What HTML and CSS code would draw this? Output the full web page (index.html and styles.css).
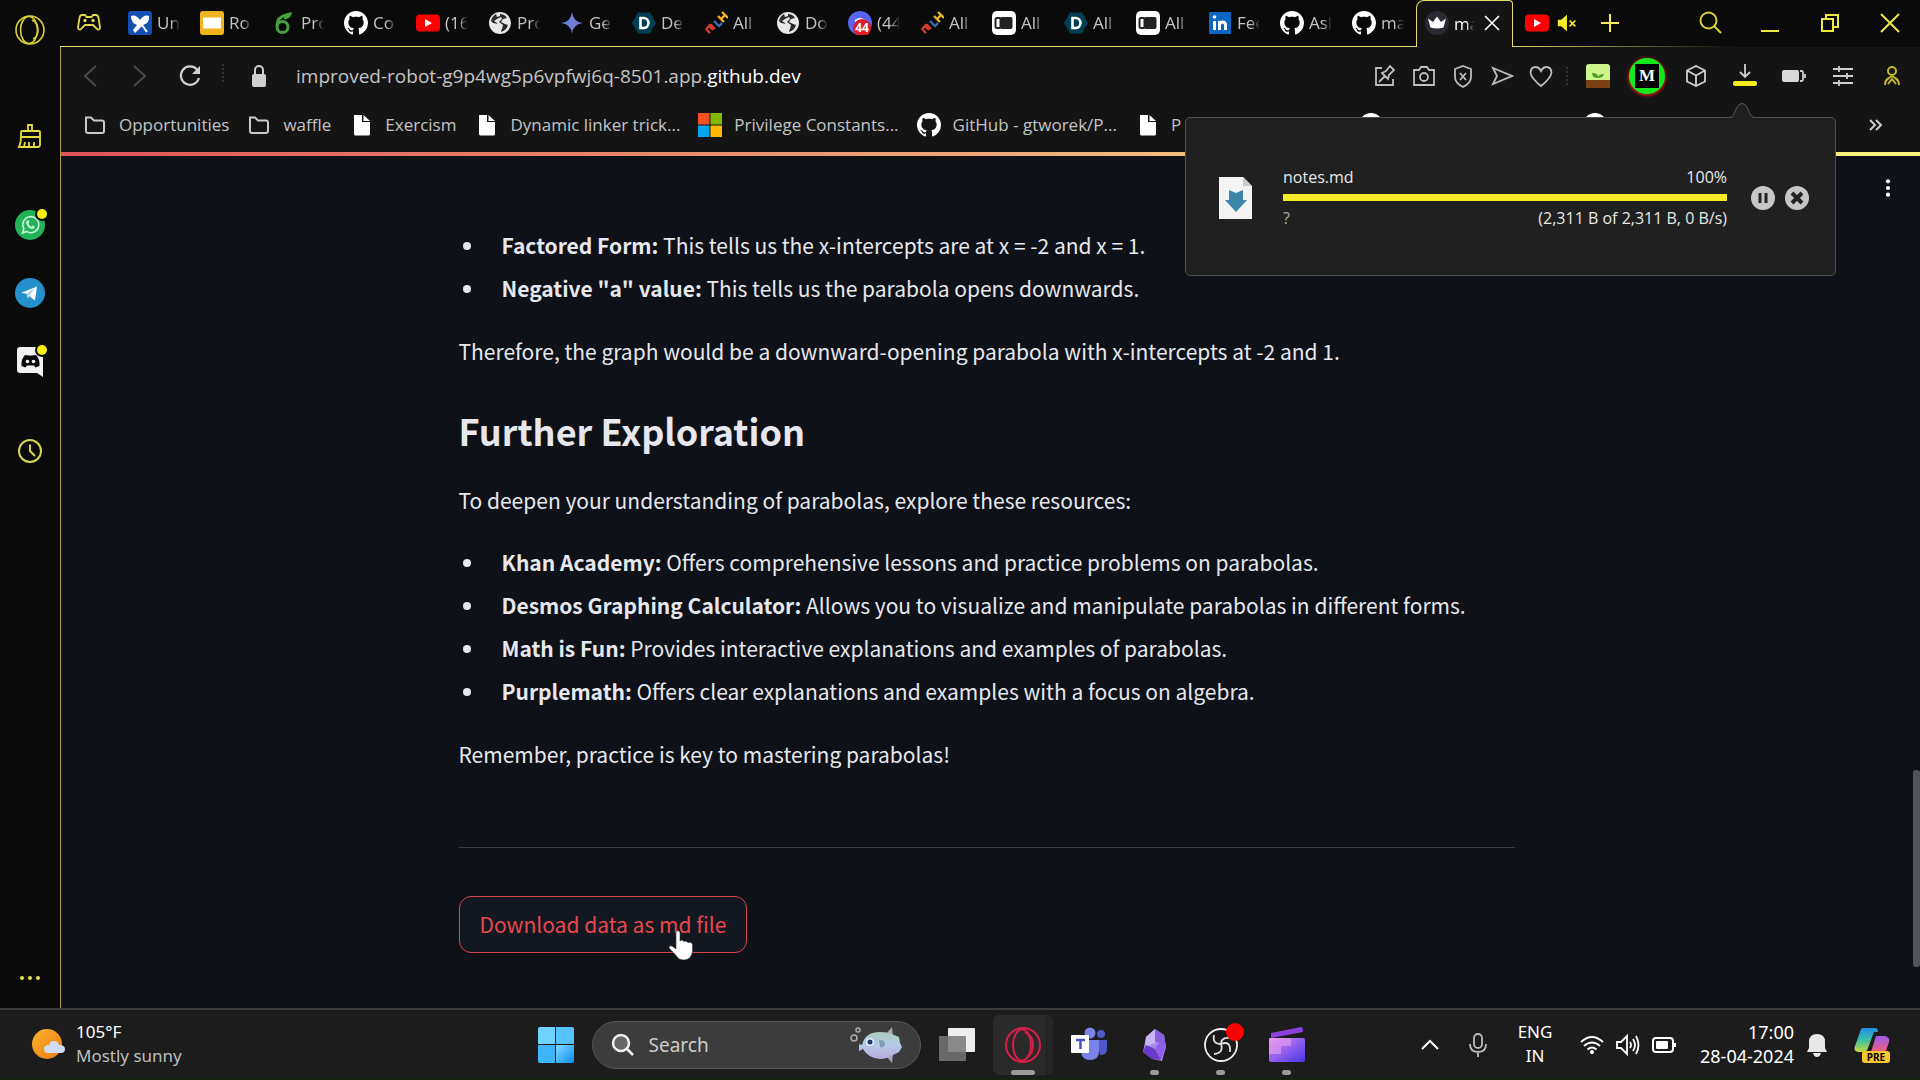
FILE: index.html
```html
<!DOCTYPE html>
<html lang="en">
<head>
    <meta charset="UTF-8">
    <meta name="viewport" content="width=device-width, initial-scale=1.0">
    <title>Notes</title>
    <link rel="stylesheet" href="styles.css">
</head>
<body>
    <!-- shared icons -->
    <svg class="defs" aria-hidden="true">
        <defs>
            <linearGradient id="gem" x1="0" y1="0" x2="1" y2="1"><stop offset="0" stop-color="#4f8df0"/><stop offset="1" stop-color="#8d6fc0"/></linearGradient>
            <linearGradient id="win" x1="0" y1="0" x2="1" y2="1"><stop offset="0" stop-color="#7fdcff"/><stop offset="1" stop-color="#0c8cf0"/></linearGradient>
            <linearGradient id="sun" x1="0" y1="0" x2="1" y2="1"><stop offset="0" stop-color="#fbb52c"/><stop offset="1" stop-color="#ee7a12"/></linearGradient>
            <linearGradient id="fish" x1="0" y1="0" x2="0" y2="1"><stop offset="0" stop-color="#a9cdbd"/><stop offset=".5" stop-color="#b5c8e6"/><stop offset="1" stop-color="#b9a9dd"/></linearGradient>
            <linearGradient id="clip" x1="0" y1="0" x2="1" y2="1"><stop offset="0" stop-color="#d78af0"/><stop offset="1" stop-color="#4a35ea"/></linearGradient>
            <linearGradient id="co1" x1="0" y1="0" x2="0" y2="1"><stop offset="0" stop-color="#1f8ce8"/><stop offset=".5" stop-color="#3cc0a8"/><stop offset="1" stop-color="#c8d83c"/></linearGradient>
            <linearGradient id="co2" x1="0" y1="0" x2="0" y2="1"><stop offset="0" stop-color="#a05af0"/><stop offset="1" stop-color="#f0607c"/></linearGradient>
        </defs>
        <symbol id="github" viewBox="0 0 16 16"><path fill="#fff" d="M8 0C3.58 0 0 3.58 0 8c0 3.54 2.29 6.53 5.47 7.59.4.07.55-.17.55-.38 0-.19-.01-.82-.01-1.49-2.01.37-2.53-.49-2.69-.94-.09-.23-.48-.94-.82-1.13-.28-.15-.68-.52-.01-.53.63-.01 1.08.58 1.23.82.72 1.21 1.87.87 2.33.66.07-.52.28-.87.51-1.07-1.78-.2-3.64-.89-3.64-3.95 0-.87.31-1.59.82-2.15-.08-.2-.36-1.02.08-2.12 0 0 .67-.21 2.2.82.64-.18 1.32-.27 2-.27s1.36.09 2 .27c1.53-1.04 2.2-.82 2.2-.82.44 1.1.16 1.92.08 2.12.51.56.82 1.27.82 2.15 0 3.07-1.87 3.75-3.65 3.95.29.25.54.73.54 1.48 0 1.07-.01 1.93-.01 2.2 0 .21.15.46.55.38A8.01 8.01 0 0 0 16 8c0-4.42-3.58-8-8-8z"/></symbol>
        <symbol id="youtube" viewBox="0 0 24 24"><rect y="3.500" width="24" height="17" rx="4" fill="#f00"/><path fill="#fff" d="M9 8v8l7-4z"/></symbol>
        <symbol id="globe" viewBox="0 0 24 24"><circle cx="12" cy="12" r="11" fill="#e8e8e8"/><path fill="#151515" d="M12 3c3 0 5 1 7 4l-4 1-2 3 4 2 3 1c-1 4-4 6-7 7l1-4-3-2-1-2-5-1-2-2c1-4 3-6 5-7l1 3 3-1z" opacity=".9"/><path fill="#e8e8e8" d="M9 8l4-2 1 2-3 3 4 3-1 4-3-2-2-4-3-2z"/></symbol>
        <symbol id="mlh" viewBox="0 0 24 24"><g fill="none" stroke-width="2.400"><path stroke="#d63a2f" d="M2 18l4 4M2 18l3-3 4 4M5 15l2-1 4 4"/><path stroke="#3a6bb0" d="M10 10l5 5 3-3"/><path stroke="#f0b429" d="M14 5l6 6M18 1l6 6M17 8l4-4"/></g></symbol>
        <symbol id="devpost" viewBox="0 0 24 24"><path fill="#003e54" d="M6 1.600h12L24 12l-6 10.400H6L0 12z"/><path fill="none" stroke="#fff" stroke-width="2.600" d="M8.500 7v10h3a5 5 0 0 0 0-10z"/></symbol>
        <symbol id="unstop" viewBox="0 0 24 24"><rect width="24" height="24" rx="5" fill="#fff"/><rect x="7.500" y="6" width="13" height="12" rx="2" fill="#222"/><path fill="none" stroke="#222" stroke-width="2" d="M8 7H5q-1.500 0-1.500 1.500v7Q3.500 17 5 17h3"/></symbol>
        <symbol id="folder" viewBox="0 0 24 24"><path fill="none" stroke="#c9c9c9" stroke-width="2" d="M3 4.500h5l3 3h8a2 2 0 0 1 2 2V18a2 2 0 0 1-2 2H5a2 2 0 0 1-2-2z"/></symbol>
        <symbol id="doc" viewBox="0 0 24 24"><path fill="#fff" d="M5 2h8v7h8v12a1.500 1.500 0 0 1-1.500 1.500h-13A1.500 1.500 0 0 1 5 21z"/><path fill="#fff" d="M14.500 2L21 8h-6.500z"/></symbol>
    </svg>

    <div class="browser">
        <nav class="sidebar">
            <button class="side-btn" aria-label="Menu"><svg viewBox="0 0 30 30" fill="none" stroke="#d8d038" stroke-width="1.600"><circle cx="15" cy="15" r="14"/><ellipse cx="14" cy="15" rx="8.500" ry="13.500"/><path d="M17 5q6 3 6 10t-5 9"/></svg></button>
            <button class="side-btn cleaner" aria-label="Cleaner"><svg viewBox="0 0 30 30" fill="none" stroke="#e6de3c" stroke-width="1.800"><path d="M13 10V4h4v6M6 16v-5q0-1 1-1h17q1 0 1 1v5zM6 16q0 6-2 10h19q2 0 2-3v-7M9 26l1-5M14 26v-5M19 26v-5"/></svg></button>
            <button class="side-btn whatsapp" aria-label="WhatsApp"><svg viewBox="0 0 30 30"><circle cx="15" cy="15" r="15" fill="#22b358"/><path fill="none" stroke="#c9f7d8" stroke-width="1.600" d="M7.500 23l1.300-4.500a8 8 0 1 1 2.700 2.900z"/><path fill="#c9f7d8" d="M12 10.500l1.500-.5 1 2.500-1 1.200q1 2 3 3l1.300-1.200 2.200 1.200q-.5 2.600-3 2.300-5-1.200-6-6.500z"/></svg><i class="badge"></i></button>
            <button class="side-btn telegram" aria-label="Telegram"><svg viewBox="0 0 30 30"><circle cx="15" cy="15" r="15" fill="#2490cc"/><path fill="#fff" d="M6 15L22 8.500 20 22.500l-6-4.500-1.500 2-1-4.500z"/><path fill="#a8d4ee" d="M11.500 15.500L20 10l-6 8-1.500 2.500z"/></svg></button>
            <button class="side-btn discord" aria-label="Discord"><svg viewBox="0 0 30 30"><path fill="#f2f2f2" d="M5 1h21q2 0 2 2v28l-6-4H5q-3 0-3-3V4q0-3 3-3z"/><path fill="#0a0a0a" d="M10 9l4 .5h3l4-.5q4 4 3.500 11l-4 1.500-1.500-2h-7l-1.500 2-4-1.500Q6 13 10 9z"/><circle cx="12.500" cy="15.500" r="1.800" fill="#f2f2f2"/><circle cx="18.500" cy="15.500" r="1.800" fill="#f2f2f2"/></svg><i class="badge"></i></button>
            <button class="side-btn history" aria-label="History"><svg viewBox="0 0 30 30" fill="none" stroke="#d8d550" stroke-width="2"><circle cx="15" cy="15" r="11"/><path d="M15 8.500V15l5 5"/></svg></button>
            <button class="side-btn more" aria-label="More"><svg viewBox="0 0 30 30" fill="#e6de50"><circle cx="7" cy="15" r="2"/><circle cx="15" cy="15" r="2"/><circle cx="23" cy="15" r="2"/></svg></button>
        </nav>

        <div class="window">
            <div class="tab-strip">
                <button class="gx-corner" aria-label="GX Corner"><svg viewBox="0 0 24 24" fill="none" stroke="#e0d94a" stroke-width="1.800"><path d="M5 4h3l1.500 2h5L16 4h3q2 0 2.500 3L23 16q0 3-2.500 2.500L16 14H8l-4.500 4.500Q1 19 1 16L2.500 7Q3 4 5 4z"/><circle cx="8" cy="9.500" r=".8"/><circle cx="16" cy="9.500" r=".8"/></svg></button>
                <button class="tab"><svg viewBox="0 0 24 24"><rect width="24" height="24" rx="3" fill="#1551b5"/><path fill="#fff" d="M3 5q5-2 9 4 4-6 9-4 1 7-6 9l-8 8-2-3 4-5q-6-2-6-9z"/><path stroke="#fff" stroke-width="2" d="M14 14l5 7"/></svg><span>Un</span></button>
                <button class="tab"><svg viewBox="0 0 24 24"><rect width="24" height="24" rx="3" fill="#efb41e"/><rect x="3" y="6.500" width="18" height="11" fill="#fff"/></svg><span>Ro</span></button>
                <button class="tab"><svg viewBox="0 0 24 24" fill="none" stroke="#47a141" stroke-width="3"><circle cx="10.500" cy="16" r="5.500"/><path d="M5 15Q5 6 14 4l4-1q-1 4-6 4"/></svg><span>Pro</span></button>
                <button class="tab"><svg><use href="#github"/></svg><span>Co</span></button>
                <button class="tab"><svg><use href="#youtube"/></svg><span>(16</span></button>
                <button class="tab"><svg><use href="#globe"/></svg><span>Pro</span></button>
                <button class="tab"><svg viewBox="0 0 24 24"><path fill="url(#gem)" d="M12 1q1 10 11 11-10 1-11 11-1-10-11-11 10-1 11-11z"/></svg><span>Ge</span></button>
                <button class="tab"><svg><use href="#devpost"/></svg><span>De</span></button>
                <button class="tab"><svg><use href="#mlh"/></svg><span>All</span></button>
                <button class="tab"><svg><use href="#globe"/></svg><span>Do</span></button>
                <button class="tab"><svg viewBox="0 0 24 24"><circle cx="12" cy="12" r="12" fill="#5865f2"/><path fill="#fff" d="M7 9q5-4 10 0v4H7z"/><circle cx="14" cy="17" r="9" fill="#e01b2c"/><text x="14" y="21" class="count">44</text></svg><span>(44</span></button>
                <button class="tab"><svg><use href="#mlh"/></svg><span>All</span></button>
                <button class="tab"><svg><use href="#unstop"/></svg><span>All</span></button>
                <button class="tab"><svg><use href="#devpost"/></svg><span>All</span></button>
                <button class="tab"><svg><use href="#unstop"/></svg><span>All</span></button>
                <button class="tab"><svg viewBox="0 0 24 24"><rect x="1" y="1" width="22" height="22" rx="1" fill="#0a66c2"/><path stroke="#fff" stroke-width="3" fill="none" d="M6.500 10v9M11.500 10v9M11.500 19v-5q0-3 3-3t3 3v5"/><circle cx="6.500" cy="6" r="1.800" fill="#fff"/></svg><span>Fee</span></button>
                <button class="tab"><svg><use href="#github"/></svg><span>Asl</span></button>
                <button class="tab"><svg><use href="#github"/></svg><span>ma</span></button>
                <button class="tab active"><svg viewBox="0 0 24 24"><circle cx="12" cy="12" r="12" fill="#2a2a34"/><path fill="#fff" d="M3 7.500l5 3.500 4-5.500 4 5.500 5-3.500-2.500 9q-6.500 2-13 0z"/></svg><span>ma</span><svg class="close" viewBox="0 0 16 16"><path stroke="#fff" stroke-width="1.600" d="M1 1l14 14M15 1L1 15"/></svg></button>
                <button class="tab muted" aria-label="Muted tab"><svg><use href="#youtube"/></svg><svg viewBox="0 0 24 24"><path fill="#f5ec2c" d="M1 8h4l7-6v20l-7-6H1z"/><path stroke="#f5ec2c" stroke-width="2" d="M15 9l7 7M22 9l-7 7"/></svg></button>
                <button class="new-tab" aria-label="New tab"><svg viewBox="0 0 24 24"><path stroke="#f5ec5c" stroke-width="2" d="M12 3v18M3 12h18"/></svg></button>
                <div class="window-controls">
                    <button aria-label="Search tabs"><svg viewBox="0 0 24 24" fill="none" stroke="#d8d038" stroke-width="2"><circle cx="10.500" cy="9.500" r="8"/><path d="M16 15l7 7"/></svg></button>
                    <button aria-label="Minimize"><svg viewBox="0 0 24 24"><path stroke="#f0e840" stroke-width="2" d="M3 20h18"/></svg></button>
                    <button aria-label="Restore"><svg viewBox="0 0 24 24" fill="none" stroke="#f0e840" stroke-width="2"><path d="M4 8h11v12H4zM8 8V4h12v12h-5"/></svg></button>
                    <button aria-label="Close"><svg viewBox="0 0 24 24"><path stroke="#f0e840" stroke-width="2" d="M3 3l18 18M21 3L3 21"/></svg></button>
                </div>
            </div>

            <div class="view">
                <div class="address-bar">
                    <div class="nav-buttons">
                        <button aria-label="Back"><svg viewBox="0 0 24 24" fill="none" stroke="#4a4a4a" stroke-width="2"><path d="M18 2L7 12l11 10"/></svg></button>
                        <button aria-label="Forward"><svg viewBox="0 0 24 24" fill="none" stroke="#4a4a4a" stroke-width="2"><path d="M6 2l11 10L6 22"/></svg></button>
                        <button aria-label="Reload"><svg viewBox="0 0 24 24" fill="none" stroke="#cfcfcf" stroke-width="2.200"><path d="M21 14a9.200 9.200 0 1 1-2-8.500"/><path fill="#cfcfcf" stroke="none" d="M22 2v8h-8z"/></svg></button>
                    </div>
                    <svg class="lock" viewBox="0 0 24 24"><rect x="5" y="10" width="14" height="13" rx="2" fill="#cfcfcf"/><path fill="none" stroke="#cfcfcf" stroke-width="2" d="M8 11V6a4 4 0 0 1 8 0v5"/></svg>
                    <div class="url">improved-robot-g9p4wg5p6vpfwj6q-8501.app.<b>github.dev</b></div>
                    <div class="page-actions">
                        <button aria-label="Pin"><svg viewBox="0 0 24 24" fill="none" stroke="#bdbdbd" stroke-width="1.800"><path d="M9 4H3v17h17v-6M6 18l6-6M9 9l6 6 1-4 5-5-4-4-4 5z"/></svg></button>
                        <button aria-label="Snapshot"><svg viewBox="0 0 24 24" fill="none" stroke="#bdbdbd" stroke-width="1.800"><path d="M2 6h5l2-3h6l2 3h5v15H2z"/><circle cx="12" cy="13" r="4"/></svg></button>
                        <button aria-label="Ad blocker"><svg viewBox="0 0 24 24" fill="none" stroke="#bdbdbd" stroke-width="1.800"><path d="M12 2l8 3v8q0 6-8 10-8-4-8-10V5zM9 9l6 7M15 9l-6 7"/></svg></button>
                        <button aria-label="Send"><svg viewBox="0 0 24 24" fill="none" stroke="#bdbdbd" stroke-width="1.800"><path d="M3 4l19 8-19 8 4-8z"/></svg></button>
                        <button aria-label="Bookmark"><svg viewBox="0 0 24 24" fill="none" stroke="#bdbdbd" stroke-width="1.800"><path d="M12 22Q2 14 1.500 8.500 2 3 6.500 3 10 3 12 7q2-4 5.500-4Q22 3 22.500 8.500 22 14 12 22z"/></svg></button>
                    </div>
                    <div class="extensions">
                        <button aria-label="Plant"><svg viewBox="0 0 24 24"><rect width="24" height="24" rx="3" fill="#cdf58c"/><path fill="#7a3f12" d="M0 16h24v5q0 3-3 3H3q-3 0-3-3z"/><path fill="#4c9a2a" d="M6 9q6 0 6 4 1-3 6-3-1 4-6 4-6 0-6-5z"/></svg></button>
                        <button class="ext-m" aria-label="M extension"><b>M</b></button>
                        <button aria-label="Extensions"><svg viewBox="0 0 24 24" fill="none" stroke="#cfcfcf" stroke-width="1.800"><path d="M12 2l9 4.500v11L12 22l-9-4.500v-11zM3 6.500l9 5 9-5M12 11.500V22"/></svg></button>
                        <button aria-label="Downloads"><svg viewBox="0 0 24 24" fill="none"><path stroke="#cfcfcf" stroke-width="1.800" d="M12 0v13M7 8l5 5 5-5"/><rect y="17" width="24" height="5" rx="2" fill="#f5ec1c"/></svg></button>
                        <button aria-label="Battery saver"><svg viewBox="0 0 24 24"><rect y="6" width="17" height="12" rx="2" fill="#d8d8d8"/><path fill="none" stroke="#cfcfcf" stroke-width="1.800" d="M18 7h1.500q1.500 0 1.500 1.500v7q0 1.500-1.500 1.500H18M23 10v4"/></svg></button>
                        <button aria-label="Easy setup"><svg viewBox="0 0 24 24" stroke="#cfcfcf" stroke-width="1.800"><path d="M2 5h20M2 12h20M2 19h20M8 2v6M16 9v6M8 16v6"/></svg></button>
                        <button aria-label="Profile"><svg viewBox="0 0 24 24" fill="none" stroke="#c4b52e" stroke-width="2"><circle cx="12" cy="7" r="4"/><path d="M5 21q0-5 4-7l3-2 3 2q4 2 4 7M8 20l4-5 4 5"/></svg></button>
                    </div>
                </div>

                <div class="bookmarks">
                    <a href="#"><svg><use href="#folder"/></svg>Opportunities</a>
                    <a href="#"><svg><use href="#folder"/></svg>waffle</a>
                    <a href="#"><svg><use href="#doc"/></svg>Exercism</a>
                    <a href="#"><svg><use href="#doc"/></svg>Dynamic linker trick...</a>
                    <a href="#"><svg viewBox="0 0 24 24"><path fill="#f25022" d="M0 0h11.500v11.500H0z"/><path fill="#7fba00" d="M12.500 0H24v11.500H12.500z"/><path fill="#00a4ef" d="M0 12.500h11.500V24H0z"/><path fill="#ffb900" d="M12.500 12.500H24V24H12.500z"/></svg>Privilege Constants...</a>
                    <a href="#"><svg><use href="#github"/></svg>GitHub - gtworek/P...</a>
                    <a href="#" class="long"><svg><use href="#doc"/></svg>P</a>
                    <a href="#" class="long" aria-label="GitHub"><svg><use href="#github"/></svg></a>
                    <a href="#" aria-label="GitHub"><svg><use href="#github"/></svg></a>
                    <button class="overflow" aria-label="More bookmarks"><svg viewBox="0 0 24 24" fill="none" stroke="#cfcfcf" stroke-width="2"><path d="M6 7l5 5-5 5M12 7l5 5-5 5"/></svg></button>
                </div>

                <div class="download-popup">
                    <svg class="arrow" viewBox="0 0 24 16"><path fill="#202020" stroke="#555" d="M0 14.500q3 0 5-6l3-6q4-4 8 0l3 6q2 6 5 6"/><path fill="#202020" d="M2 14h20v2H2z"/></svg>
                    <svg class="file-icon" viewBox="0 0 34 44"><path fill="#f4f4f4" d="M0 1h24l9 9v33H0z"/><path fill="#c8c8c8" d="M24 1v9h9z"/><path fill="#3a87ab" d="M10 14l7 3 7-3v10h4L17 36 6 24h4z"/></svg>
                    <div class="download-info">
                        <div class="row"><span>notes.md</span><span>100%</span></div>
                        <div class="progress"></div>
                        <div class="row"><span class="dim">?</span><span>(2,311 B of 2,311 B, 0 B/s)</span></div>
                    </div>
                    <div class="download-buttons">
                        <button aria-label="Pause"><svg viewBox="0 0 24 24"><circle cx="12" cy="12" r="12" fill="#c6c6c6"/><path stroke="#222" stroke-width="3" d="M9 7v10M15 7v10"/></svg></button>
                        <button aria-label="Cancel"><svg viewBox="0 0 24 24"><circle cx="12" cy="12" r="12" fill="#c6c6c6"/><path stroke="#222" stroke-width="4" d="M7 7l10 10M17 7L7 17"/></svg></button>
                    </div>
                </div>

                <main class="page">
                    <button class="kebab" aria-label="Page menu"><svg viewBox="0 0 24 24" fill="#fff"><circle cx="12" cy="4" r="2.500"/><circle cx="12" cy="12" r="2.500"/><circle cx="12" cy="20" r="2.500"/></svg></button>
                    <div class="scroll-thumb"></div>
                    <div class="content">
                        <ul>
                            <li><strong>Factored Form:</strong> This tells us the x-intercepts are at x = -2 and x = 1.</li>
                            <li><strong>Negative "a" value:</strong> This tells us the parabola opens downwards.</li>
                        </ul>
                        <p>Therefore, the graph would be a downward-opening parabola with x-intercepts at -2 and 1.</p>
                        <h2>Further Exploration</h2>
                        <p>To deepen your understanding of parabolas, explore these resources:</p>
                        <ul>
                            <li><strong>Khan Academy:</strong> Offers comprehensive lessons and practice problems on parabolas.</li>
                            <li><strong>Desmos Graphing Calculator:</strong> Allows you to visualize and manipulate parabolas in different forms.</li>
                            <li><strong>Math is Fun:</strong> Provides interactive explanations and examples of parabolas.</li>
                            <li><strong>Purplemath:</strong> Offers clear explanations and examples with a focus on algebra.</li>
                        </ul>
                        <p>Remember, practice is key to mastering parabolas!</p>
                        <hr>
                        <button class="download-btn">Download data as md file<svg class="cursor" viewBox="0 0 26 32"><path fill="#fff" stroke="#333" stroke-width=".6" d="M8 3q2-3 4 0v9q2-2 4 .500 2-1.500 4 1 3-1 4.500 1.500V22q-1 9-9 9-5 0-7-4L1 19q0-3 3-2l4 3z"/></svg></button>
                    </div>
                </main>
            </div>
        </div>
    </div>

    <footer class="taskbar">
        <button class="weather">
            <svg viewBox="0 0 36 36"><circle cx="15" cy="17" r="15" fill="url(#sun)"/><path fill="#cfdcf5" d="M16 26q-4 0-4-4t5-4q1-4 5-4t5 4q6 0 6 4t-4 4z"/></svg>
            <span class="lines"><span>105°F</span><span class="dim">Mostly sunny</span></span>
        </button>
        <div class="apps">
            <button aria-label="Start"><svg viewBox="0 0 36 36" fill="url(#win)"><path fill="#6fd3ff" d="M2 0h15v17H0V2q0-2 2-2z"/><path fill="#56c4fc" d="M18 0h16q2 0 2 2v15H18z"/><path fill="#3fb6fa" d="M0 18h17v18H2q-2 0-2-2z"/><path d="M18 18h18v16q0 2-2 2H18z"/></svg></button>
            <label class="search">
                <svg viewBox="0 0 24 24" fill="#666" stroke="#eee" stroke-width="2.500"><circle cx="10" cy="10" r="8"/><path d="M16 16l6 6"/></svg>
                <input type="text" placeholder="Search" aria-label="Search">
                <svg class="fish" viewBox="0 0 52 38"><g fill="none" stroke="#aaa" stroke-width="1.500"><circle cx="4" cy="12" r="3"/><circle cx="8" cy="4" r="2"/></g><path fill="#a9a2b8" d="M36 8l6-7 1 9zM36 30l6 7 1-9z"/><path fill="url(#fish)" d="M9 18l3 1q3-13 18-13 9 0 14 3l5 2 1 6 2 4-3 5-6 3q-6 4-13 4-12-1-17-10l-4 2z"/><path fill="#7d9fae" d="M29 14q6 0 6 4-1 4-5 3z"/><circle cx="20" cy="16" r="4" fill="#eef"/><circle cx="20" cy="16" r="2.500" fill="#123a6a"/></svg>
            </label>
            <button aria-label="Task view"><svg viewBox="0 0 36 36"><rect x="9" y="1" width="27" height="24" rx="1" fill="#eee"/><rect y="9" width="27" height="25" rx="1" fill="#777" opacity=".85"/></svg></button>
            <button class="current" aria-label="Opera GX"><svg viewBox="0 0 36 36" fill="none" stroke="#d61f48" stroke-width="2"><circle cx="18" cy="18" r="17"/><ellipse cx="17" cy="18" rx="9" ry="15.500"/><path d="M20 5q8 4 8 13t-6 12"/></svg></button>
            <button aria-label="Teams"><svg viewBox="0 0 36 36"><circle cx="19" cy="6" r="5.500" fill="#7b83eb"/><circle cx="30" cy="7" r="4" fill="#5059c9"/><path fill="#5059c9" d="M26 13h10v9q0 6-7 6z"/><path fill="#7b83eb" d="M11 13h17v11q0 9-9 9-8 0-9-8z"/><rect y="8" width="18" height="18" rx="1" fill="#fff"/><path stroke="#4b53bc" stroke-width="2.500" d="M5 13h9M9.500 13v9"/></svg></button>
            <button class="running" aria-label="Obsidian"><svg viewBox="0 0 36 36"><path fill="#a78be8" d="M18 2l9 6 2 12-4 14-10-2-9-7 3-15z"/><path fill="#c9b5f5" d="M18 2L9 10l-1 10 10-4z"/><path fill="#8a60e0" d="M18 2l9 6 2 12-7-4-4-2z"/><path fill="#6a3ac8" d="M6 25l3-7 9 4 6 11-9-1z"/><path fill="#8f5eea" d="M29 20l-7-4-4 6 6 11z"/></svg></button>
            <button class="running" aria-label="OBS Studio"><svg viewBox="0 0 36 36"><circle cx="18" cy="18" r="16" fill="#18181a" stroke="#eee" stroke-width="1.800"/><path fill="none" stroke="#ddd" stroke-width="1.800" d="M11 8q-2 9 7 9 10-4 9 8M18 17q3 9-7 10M18 17q0-7 9-6"/><circle cx="32" cy="5" r="9" fill="#f00"/></svg></button>
            <button class="running" aria-label="Clipchamp"><svg viewBox="0 0 36 36"><path fill="#8b3fdc" d="M2 6L32 0q2 0 2 5L2 11z"/><rect y="11" width="36" height="24" rx="2" fill="url(#clip)"/><path fill="#f6a8f4" opacity=".5" d="M0 11h22v8H12v8H0z"/></svg></button>
        </div>
        <div class="tray">
            <button aria-label="Hidden icons"><svg viewBox="0 0 24 24" fill="none" stroke="#fff" stroke-width="2"><path d="M4 16l8-8 8 8"/></svg></button>
            <button class="mic" aria-label="Microphone"><svg viewBox="0 0 24 24" fill="none" stroke="#bbb" stroke-width="1.800"><rect x="8" y="1" width="8" height="14" rx="4"/><path d="M4 11q0 8 8 8t8-8M12 19v5"/></svg></button>
            <button class="lines lang"><span>ENG</span><span>IN</span></button>
            <button class="status" aria-label="Network, volume, battery">
                <svg viewBox="0 0 24 24" fill="none" stroke="#fff" stroke-width="1.800"><path d="M1 9q11-10 22 0M4 13q8-7 16 0M7.500 16.500q4.500-4 9 0"/><circle cx="12" cy="19" r="1.600" fill="#fff" stroke="none"/><circle cx="12" cy="19" r="1"/></svg>
                <svg viewBox="0 0 24 24" fill="none" stroke="#fff" stroke-width="1.800"><path d="M1 9h4l6-6v18l-6-6H1zM14 9q2 3 0 6M17 6q4 6 0 12M20 3q5 9 0 18"/></svg>
                <svg viewBox="0 0 24 24" fill="none"><rect x="1" y="5" width="20" height="14" rx="3" stroke="#fff" stroke-width="2"/><rect x="4" y="8" width="12" height="8" rx="1" fill="#fff"/><path stroke="#fff" stroke-width="2" d="M23 10v4"/></svg>
            </button>
            <button class="lines clock"><span>17:00</span><span>28-04-2024</span></button>
            <button class="bell" aria-label="Notifications"><svg viewBox="0 0 24 24" fill="#e8e8e8"><path d="M12 1q8 0 8 8v6l2 4H2l2-4V9q0-8 8-8zM8 20h8q-1 4-4 4t-4-4z"/></svg></button>
            <button class="copilot" aria-label="Copilot"><svg viewBox="0 0 36 36"><path fill="url(#co1)" d="M9 1h12q3 0 3 4h-4L14 21q-1 4-5 4H4q-5-1-3-6L6 5q1-4 3-4z"/><path fill="url(#co2)" d="M22 9h9q5 1 4 6l-3 9-15 1z"/><rect x="8" y="24" width="28" height="12" rx="3" fill="#fbc62e"/><text x="22" y="34" class="pre">PRE</text></svg></button>
        </div>
    </footer>
</body>
</html>
```
FILE: styles.css
```css
* {
    box-sizing: border-box;
}
body {
    margin: 0;
    height: 100vh;
    display: flex;
    flex-direction: column;
    background-color: #0a0a0a;
    color: #c4c4c4;
    font-family: "Open Sans", "Noto Sans", sans-serif;
    font-size: 17px;
    overflow: hidden;
}
button {
    padding: 0;
    border: none;
    background: none;
    color: inherit;
    font-family: inherit;
    font-size: inherit;
    display: flex;
    align-items: center;
    justify-content: center;
    flex: none;
}
svg {
    width: 24px;
    height: 24px;
    flex: none;
    display: block;
}
.defs {
    position: absolute;
    width: 0;
    height: 0;
}
.browser {
    flex: 1;
    min-height: 0;
    display: flex;
}

/* sidebar */
.sidebar {
    width: 60px;
    padding: 15px 0;
    display: flex;
    flex-direction: column;
    align-items: center;
}
.side-btn {
    position: relative;
    width: 30px;
    height: 30px;
}
.side-btn svg {
    width: 30px;
    height: 30px;
    overflow: visible;
}
.cleaner {
    margin-top: 76px;
}
.whatsapp {
    margin-top: 59px;
}
.telegram, .discord {
    margin-top: 38px;
}
.history {
    margin-top: 60px;
}
.more {
    margin-top: auto;
}
.badge {
    position: absolute;
    top: -1px;
    right: -2px;
    width: 10px;
    height: 10px;
    border-radius: 50%;
    background-color: #ffee10;
    box-shadow: 0 0 0 2px #0a0a0a;
}

/* tabs */
.window {
    flex: 1;
    min-width: 0;
    display: flex;
    flex-direction: column;
}
.tab-strip {
    height: 47px;
    padding-left: 17px;
    display: flex;
    background: linear-gradient(90deg, #e3dc6a 78%, transparent 90%) bottom / 100% 1px no-repeat;
}
.tab-strip button {
    padding-bottom: 2px;
}
.gx-corner {
    margin-right: 19px;
}
.tab-strip .tab {
    width: 72px;
    padding: 0 8px 2px;
    gap: 5px;
    justify-content: flex-start;
}
.tab span {
    width: 23px;
    overflow: hidden;
    text-align: left;
    white-space: nowrap;
    mask-image: linear-gradient(90deg, #000 60%, transparent);
}
.tab-strip .active {
    width: 97px;
    background-color: #141414;
    border: 1px solid #e3dc6a;
    border-bottom: none;
    border-radius: 8px 4px 0 0;
    color: #fff;
}
.active span {
    width: 20px;
}
.tab .close {
    width: 16px;
    height: 16px;
    margin-left: 5px;
}
.tab-strip .muted {
    width: 84px;
    gap: 8px;
    padding: 0 12px 2px;
}
.muted svg + svg {
    width: 20px;
}
.new-tab {
    width: 26px;
}
.count {
    font: 700 12px "Open Sans", sans-serif;
    fill: #fff;
    text-anchor: middle;
}
.window-controls {
    margin-left: auto;
    margin-right: 18px;
    display: flex;
    gap: 36px;
}

/* address bar and bookmarks */
.view {
    position: relative;
    flex: 1;
    min-height: 0;
    display: flex;
    flex-direction: column;
    border-left: 1px solid #a89f3c;
    background-color: #141414;
}
.address-bar {
    height: 58px;
    padding: 0 16px 0 17px;
    display: flex;
    align-items: center;
}
.nav-buttons {
    display: flex;
    gap: 26px;
}
.nav-buttons::after, .page-actions::after {
    content: "";
    height: 18px;
    border-left: 2px dotted #333;
    margin-left: -6px;
}
.lock {
    margin: 0 25px 0 23px;
}
.url {
    flex: 1;
    font-size: 19px;
}
.url b {
    font-weight: 400;
    color: #fff;
}
.page-actions, .extensions {
    display: flex;
    align-items: center;
}
.page-actions {
    gap: 15px;
    margin-right: 18px;
}
.page-actions::after {
    margin-left: -2px;
}
.extensions {
    gap: 25px;
}
.ext-m {
    position: relative;
    width: 24px;
    height: 24px;
    color: #fff;
    font-family: "Liberation Serif", serif;
}
.ext-m::before {
    content: "";
    position: absolute;
    inset: -6px;
    border-radius: 50%;
    background-color: #14e81f;
    box-shadow: 0 1px 3px 1px #c41414;
}
.ext-m b {
    position: relative;
    width: 24px;
    background-color: #000;
    line-height: 24px;
}
.bookmarks {
    height: 47px;
    padding: 0 32px 8px 22px;
    display: flex;
    align-items: center;
    gap: 18px;
}
.bookmarks a {
    display: flex;
    align-items: center;
    gap: 12px;
    color: #c4c4c4;
    text-decoration: none;
    white-space: nowrap;
}
.bookmarks .long {
    width: 206px;
}
.overflow {
    margin-left: auto;
}

/* download popup */
.download-popup {
    position: absolute;
    top: 70px;
    right: 84px;
    width: 651px;
    height: 159px;
    padding: 2px 26px 0 33px;
    display: flex;
    align-items: center;
    background-color: #202020;
    border: 1px solid #505050;
    border-radius: 5px;
    z-index: 2;
}
.arrow {
    position: absolute;
    top: -15px;
    right: 81px;
    height: 16px;
}
.file-icon {
    width: 34px;
    height: 44px;
    margin-right: 30px;
}
.download-info {
    flex: 1;
    font-size: 16px;
    color: #e8e8e8;
}
.download-info .row {
    display: flex;
    justify-content: space-between;
    line-height: 34px;
}
.dim {
    color: #a8a8a8;
}
.progress {
    height: 7px;
    background-color: #f3ea2a;
}
.download-buttons {
    display: flex;
    gap: 10px;
    margin-left: 24px;
}

/* page */
.page {
    position: relative;
    flex: 1;
    min-height: 0;
    border-top: 4px solid;
    border-image: linear-gradient(90deg, #e0525a, #f0a878 50%, #f5e87a 80%, #fbf37c) 1;
    background-color: #0e1117;
    color: #e6e8ee;
    font-family: "Noto Sans CJK SC", sans-serif;
    font-size: 21px;
    line-height: 38px;
}
.content {
    width: 1056px;
    max-width: 100%;
    margin: 0 auto;
    padding-top: 70px;
    position: relative;
    right: 4px;
}
.content ul {
    margin: 0 0 25px;
    padding-left: 27px;
}
.content li {
    margin-bottom: 5px;
    padding-left: 16px;
}
.content li:last-child {
    margin-bottom: 0;
}
.content p {
    margin: 0 0 24px;
}
.content h2 {
    margin: 35px 0 26px;
    font-size: 36px;
    line-height: 50px;
}
.content hr {
    margin: 74px 0 48px;
    border: none;
    border-top: 1px solid #3a3d44;
}
.download-btn {
    position: relative;
    height: 57px;
    padding: 0 20px 2px;
    border: 1px solid #d8464e;
    border-radius: 12px;
    background-color: #131720;
    color: #e8474f;
}
.cursor {
    position: absolute;
    left: 208px;
    top: 32px;
    width: 26px;
    height: 32px;
}
.kebab {
    position: absolute;
    top: 22px;
    right: 20px;
}
.kebab svg {
    height: 20px;
}
.scroll-thumb {
    position: absolute;
    top: 614px;
    right: 0;
    width: 7px;
    height: 197px;
    border-radius: 3px;
    background-color: #50535a;
}

/* taskbar */
.taskbar {
    height: 72px;
    display: flex;
    align-items: center;
    background-color: #1c1c1c;
    border-top: 2px solid #3c3c3e;
    border-bottom: 1px solid #14280f;
    font-family: "Noto Sans", sans-serif;
    color: #fff;
}
.weather, .tray {
    flex: 1;
    display: flex;
    align-items: center;
}
.weather {
    padding-left: 32px;
    gap: 8px;
    justify-content: flex-start;
    text-align: left;
}
.weather svg {
    width: 36px;
    height: 36px;
}
.lines {
    display: flex;
    flex-direction: column;
    line-height: 24px;
    padding-bottom: 2px;
}
.weather .dim {
    color: #bdbdbd;
}
.apps {
    display: flex;
    align-items: center;
    gap: 6px;
    height: 100%;
    margin-right: 80px;
}
.apps button {
    position: relative;
    width: 60px;
    height: 60px;
}
.apps svg {
    width: 36px;
    height: 36px;
    overflow: visible;
}
.apps .search {
    width: 329px;
    height: 48px;
    padding: 0 18px;
    display: flex;
    align-items: center;
    gap: 14px;
    background-color: #3c3c3c;
    border: 1px solid #555;
    border-radius: 24px;
}
.search svg {
    width: 24px;
    height: 24px;
}
.search .fish {
    width: 52px;
    height: 38px;
}
.search input {
    flex: 1;
    min-width: 0;
    padding: 0;
    border: none;
    outline: none;
    background: none;
    font-family: inherit;
    font-size: 19px;
    color: #fff;
}
.search input::placeholder {
    color: #ccc;
    opacity: 1;
}
.apps .current {
    background: linear-gradient(90deg, #2a2a2a 53px, #1c1c1c 53px, #1c1c1c 54px, #262626 54px);
    border-radius: 6px;
}
.current::after, .running::after {
    content: "";
    position: absolute;
    bottom: 0;
    width: 9px;
    height: 5px;
    border-radius: 3px;
    background-color: #9a9a9a;
}
.current::after {
    width: 24px;
}
.tray {
    justify-content: flex-end;
    padding-right: 30px;
}
.mic {
    margin-left: 24px;
}
.lang {
    width: 60px;
    margin: 0 15px;
}
.status {
    gap: 12px;
}
.clock {
    align-items: flex-end;
    margin-left: 24px;
    margin-right: 11px;
    font-size: 18px;
}
.bell {
    margin-right: 25px;
}
.copilot svg {
    width: 36px;
    height: 36px;
}
.pre {
    font: 700 10px "Noto Sans", sans-serif;
    text-anchor: middle;
}
```
